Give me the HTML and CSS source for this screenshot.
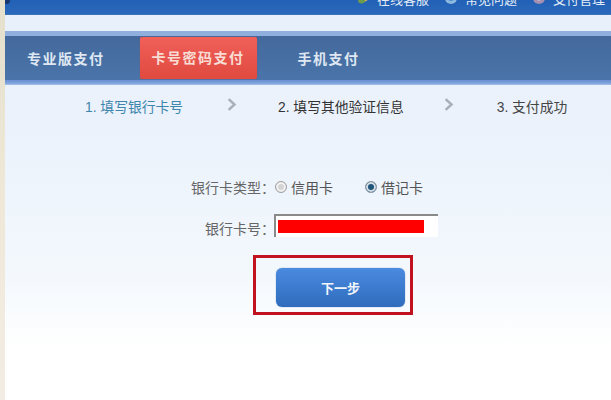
FILE: index.html
```html
<!DOCTYPE html>
<html lang="zh">
<head>
<meta charset="utf-8">
<title>卡号密码支付</title>
<link rel="stylesheet" href="styles.css">
</head>
<body>
<div class="page">
  <div class="edge"></div>
  <div class="main">
    <header class="topbar">
      <span class="corner"></span>
      <div class="toplinks">
        <span class="toplink"><svg class="ticon" viewBox="0 0 12 12"><circle cx="6.5" cy="5" r="5" fill="#c9b35a"/><circle cx="4.5" cy="8" r="3.5" fill="#6c9a4a"/></svg>在线客服</span>
        <span class="toplink"><svg class="ticon" viewBox="0 0 12 12"><circle cx="6" cy="6" r="6" fill="#8db8e0"/><circle cx="6" cy="6" r="3" fill="#4f8fce"/></svg>常见问题</span>
        <span class="toplink"><svg class="ticon" viewBox="0 0 12 12"><circle cx="6" cy="6" r="6" fill="#a58fb0"/><circle cx="6" cy="6" r="2.5" fill="#d9cfdc"/></svg>支付管理</span>
      </div>
    </header>
    <div class="band"></div>
    <nav class="tabs">
      <a class="tab">专业版支付</a>
      <a class="tab active">卡号密码支付</a>
      <a class="tab">手机支付</a>
    </nav>
    <section class="content">
      <ol class="steps">
        <li class="step current">1. 填写银行卡号</li>
        <li class="chev"><svg viewBox="0 0 12 16"><path d="M2 1.5 L9 8 L2 14.5" fill="none" stroke="#a9afb6" stroke-width="3"/></svg></li>
        <li class="step">2. 填写其他验证信息</li>
        <li class="chev"><svg viewBox="0 0 12 16"><path d="M2 1.5 L9 8 L2 14.5" fill="none" stroke="#a9afb6" stroke-width="3"/></svg></li>
        <li class="step last">3. 支付成功</li>
      </ol>
      <form class="form">
        <div class="row type">
          <span class="label">银行卡类型：</span>
          <span class="radio"></span><span class="opt">信用卡</span>
          <span class="radio on"></span><span class="opt">借记卡</span>
        </div>
        <div class="row card">
          <span class="label">银行卡号：</span>
          <span class="input"><span class="mask"></span></span>
        </div>
        <div class="highlight"><button type="button" class="next">下一步</button></div>
      </form>
    </section>
  </div>
</div>
</body>
</html>
```
FILE: styles.css
```css
* { box-sizing: border-box; }
html, body { margin: 0; height: 100%; }
body { font-family: "Liberation Sans", "Noto Sans CJK SC", sans-serif; overflow: hidden; background: #fff; }
.page { display: flex; width: 611px; height: 400px; }
.edge { width: 5px; background: linear-gradient(#e4e0cc, #efe8d8 50%, #f3ece4); }
.main { flex: 1; min-width: 0; display: flex; flex-direction: column; background: linear-gradient(#e9f1fb 0, #ebf2fb 130px, #f3f8fd 270px, #ffffff 350px); }
.topbar { position: relative; height: 15px; background: linear-gradient(#2160b4, #2a69bb); border-bottom: 1px solid #3c74ba; display: flex; justify-content: flex-end; overflow: hidden; }
.corner { position: absolute; left: 0; top: 0; width: 5px; height: 4px; background: #17386e; border-radius: 0 0 3px 0; }
.toplinks { display: flex; margin-top: -11px; padding-right: 6px; gap: 16px; }
.toplink { display: flex; align-items: center; gap: 8px; color: #e3edf8; font-size: 13px; height: 18px; white-space: nowrap; }
.ticon { width: 12px; height: 12px; }
.band { height: 16px; background: #e8f0fb; }
.tabs { height: 54px; display: flex; align-items: center; padding-left: 22px; background: linear-gradient(#8fb0dc 0 5px, #44699c 5px, #4a74aa 49px, #6a90d2 49px, #7ba0dc 52px, #a8c2e6 54px); }
.tab { font-size: 14px; letter-spacing: 1.5px; font-weight: bold; white-space: nowrap; color: #dfe8f2; }
.tab.active { width: 117px; height: 42px; margin: 0 41px 0 35px; line-height: 43px; text-align: center; background: linear-gradient(#f0605a, #e04a3f); border-radius: 2px; color: #f8ddd4; box-shadow: 0 0 1px #b5433d; }
.steps { list-style: none; margin: 0; padding: 6px 0 0 80px; display: flex; align-items: center; font-size: 13.8px; color: #333; height: 36px; }
.step { white-space: nowrap; }
.step.current { color: #3f86ad; width: 142px; }
.step.last { color: #444; }
.chev { width: 10px; height: 15px; margin-bottom: 4px; }
.chev svg { display: block; width: 10px; height: 15px; }
.chev:nth-child(2) { margin-right: 41px; }
.chev:nth-child(4) { margin-left: 40px; margin-right: 43px; }
.form { margin-top: 56px; display: flex; flex-direction: column; }
.row { display: flex; align-items: center; font-size: 14px; color: #666; }
.type { height: 20px; padding-left: 186px; }
.radio { width: 12px; height: 12px; border-radius: 50%; border: 1px solid #a0a0a0; background: #d4d4d4; box-shadow: inset 0 0 0 2px #f2f2f2; }
.radio.on { background: #1f5478; border-color: #8f9ca8; box-shadow: inset 0 0 0 2px #d5dee6; margin-left: 32px; }
.opt { margin-left: 4px; color: #555; }
.card { height: 23px; margin-top: 17px; padding-left: 200px; }
.card .label { position: relative; top: 2px; }
.input { display: block; width: 164px; height: 23px; margin-left: -1px; background: #fff; border-top: 2px solid #8a8a8a; border-left: 2px solid #8a8a8a; padding: 4px 0 0 2px; }
.mask { display: block; width: 146px; height: 13px; background: #ff0000; }
.highlight { width: 160px; height: 60px; margin: 18px 0 0 248px; border: 3px solid #c1121f; padding: 10px 0 0 20px; }
.next { display: block; width: 129px; height: 39px; border: 0; padding: 0; border-radius: 6px; background: linear-gradient(#4a8adf, #2f6cbd); color: #f2f6fc; font: bold 13px "Liberation Sans", "Noto Sans CJK SC", sans-serif; box-shadow: 0 0 1px #2c5f9f; }
```
